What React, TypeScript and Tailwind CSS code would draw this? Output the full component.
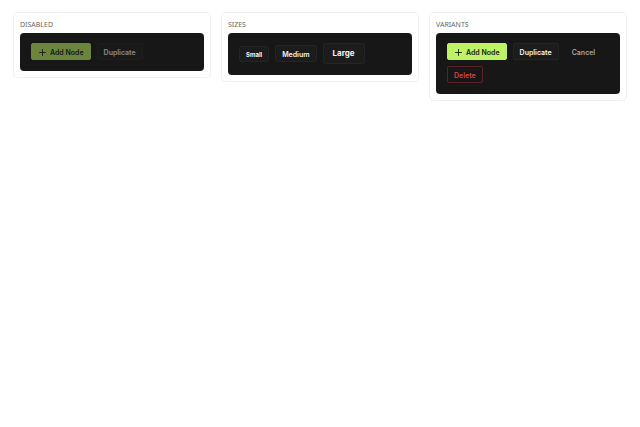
import type { ButtonHTMLAttributes, ReactNode } from 'react';
import clsx from 'clsx';

type Variant = 'primary' | 'secondary' | 'ghost' | 'danger';
type Size = 'sm' | 'md' | 'lg';

interface ButtonProps extends ButtonHTMLAttributes<HTMLButtonElement> {
  variant?: Variant;
  size?: Size;
  icon?: ReactNode;
}

const variantClasses: Record<Variant, string> = {
  primary: 'border-[#bef264] bg-[#bef264] text-[#171717]',
  secondary: 'border-[#242424] bg-[#1c1c1c] text-[#f5f5f5]',
  ghost: 'border-transparent bg-transparent text-[#a3a3a3]',
  danger: 'border-[#5a2224] bg-transparent text-[#dc3f41]',
};

const sizeClasses: Record<Size, string> = {
  sm: 'px-[6px] pt-[2px] pb-px text-[6px] leading-[11px] font-bold',
  md: 'px-[6px] pt-[3px] pb-px text-[7px] leading-[11px] font-semibold',
  lg: 'px-[9px] py-1 text-[8px] leading-[11px] font-bold',
};

function Button({ variant = 'secondary', size = 'md', icon, children, ...props }: ButtonProps) {
  return (
    <button
      type="button"
      className={clsx(
        'inline-flex items-center justify-center gap-1 rounded-xs border whitespace-nowrap disabled:opacity-50',
        variantClasses[variant],
        sizeClasses[size],
      )}
      {...props}
    >
      {icon}
      {children}
    </button>
  );
}

function PlusIcon() {
  return (
    <svg viewBox="0 0 8 8" className="size-2" fill="none" stroke="currentColor" aria-hidden="true">
      <path d="M4.5 0.5v6M1.5 3.5h6" strokeWidth="0.9" strokeLinecap="round" />
    </svg>
  );
}

function StoryCard({ title, children }: { title: string; children: ReactNode }) {
  return (
    <section className="min-w-0 rounded-[5px] border border-[#f0f0f0] bg-white p-[6px]">
      <h2 className="mb-[3px] font-['Noto_Sans',sans-serif] text-[7px] leading-[11px] text-[#666666] uppercase">
        {title}
      </h2>
      <div className="flex flex-wrap items-center gap-[6px] rounded-[4px] bg-[#171717] px-[11px] pt-[10px] pb-[11px]">
        {children}
      </div>
    </section>
  );
}

export default function App() {
  return (
    <main className="grid grid-cols-3 items-start gap-[10px] bg-white px-[13px] py-3 font-['Inter',sans-serif]">
      <StoryCard title="Disabled">
        <Button variant="primary" icon={<PlusIcon />} disabled>
          Add Node
        </Button>
        <Button variant="secondary" disabled>
          Duplicate
        </Button>
      </StoryCard>

      <StoryCard title="Sizes">
        <Button size="sm">Small</Button>
        <Button size="md">Medium</Button>
        <Button size="lg">Large</Button>
      </StoryCard>

      <StoryCard title="Variants">
        <Button variant="primary" icon={<PlusIcon />}>
          Add Node
        </Button>
        <Button variant="secondary">Duplicate</Button>
        <Button variant="ghost">Cancel</Button>
        <Button variant="danger">Delete</Button>
      </StoryCard>
    </main>
  );
}
